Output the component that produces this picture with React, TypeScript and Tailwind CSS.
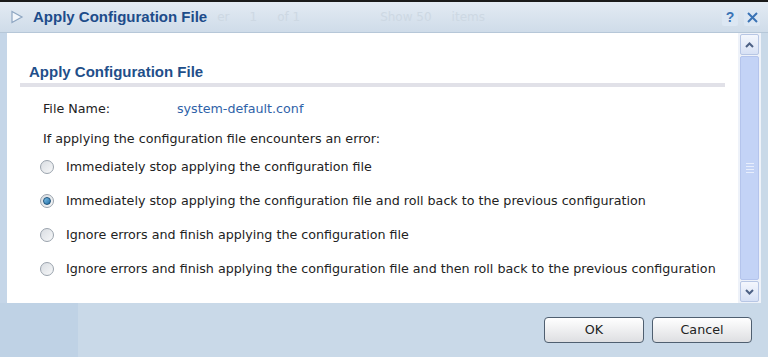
import { useState } from "react";

const options = [
  "Immediately stop applying the configuration file",
  "Immediately stop applying the configuration file and roll back to the previous configuration",
  "Ignore errors and finish applying the configuration file",
  "Ignore errors and finish applying the configuration file and then roll back to the previous configuration",
];

function Radio({ checked }: { checked: boolean }) {
  return (
    <span className="flex h-[14px] w-[14px] shrink-0 items-center justify-center rounded-full border border-[#9aa3ad] bg-gradient-to-br from-[#d9dde2] to-[#f7f8f9]">
      {checked && (
        <span className="h-[8px] w-[8px] rounded-full border border-[#1c4f77] bg-gradient-to-br from-[#7fc3ea] to-[#1f6fa6]" />
      )}
    </span>
  );
}

function ScrollBtn({ dir }: { dir: "up" | "down" }) {
  return (
    <div className="flex h-[21px] items-center justify-center rounded-[2px] border border-[#b7c6e4] bg-gradient-to-b from-[#f4f7fd] to-[#d7e1f5]">
      <svg width="9" height="6" viewBox="0 0 9 6">
        <path
          d={dir === "up" ? "M1 5 L4.5 1.5 L8 5" : "M1 1 L4.5 4.5 L8 1"}
          fill="none"
          stroke="#4d6185"
          strokeWidth="2"
        />
      </svg>
    </div>
  );
}

export default function App() {
  const [choice, setChoice] = useState(1);

  return (
    <div className="flex h-[357px] w-[768px] flex-col overflow-hidden bg-[#c9d9e8] font-['DejaVu_Sans',Verdana,sans-serif] text-[12.7px] leading-[16px] text-[#222]">
      <div className="h-[2px] bg-[#1a1a1a]" />

      {/* title bar */}
      <div className="flex h-[31px] items-center border-b border-[#b6c7d8] bg-gradient-to-b from-[#e3ebf3] to-[#cfdce9] pl-[10px] pr-[8px]">
        <svg width="14" height="14" viewBox="0 0 14 14" className="mr-[9px]">
          <path d="M2 1.5 L12 7 L2 12.5 Z" fill="#f2f6fb" stroke="#8ea6c2" strokeWidth="1.2" />
        </svg>
        <span className="font-['Liberation_Sans',Arial,sans-serif] text-[15px] font-bold text-[#1d4c8a]">
          Apply Configuration File
        </span>
        <div className="ml-[10px] flex gap-[20px] text-[12px] text-[#cdd8e3]">
          <span>er</span>
          <span>1</span>
          <span>of 1</span>
          <span className="ml-[60px]">Show 50</span>
          <span>items</span>
        </div>
        <div className="ml-auto flex gap-[6px]">
          <div className="flex h-[17px] w-[16px] items-center justify-center rounded-[2px] bg-[#dce7f3] font-['Liberation_Sans',Arial,sans-serif] text-[14px] font-bold text-[#3a73b5]">
            ?
          </div>
          <div className="flex h-[17px] w-[16px] items-center justify-center rounded-[2px] bg-[#dce7f3]">
            <svg width="11" height="11" viewBox="0 0 11 11">
              <path d="M1 1 L10 10 M10 1 L1 10" stroke="#3a73b5" strokeWidth="2" />
            </svg>
          </div>
        </div>
      </div>

      {/* body */}
      <div className="flex h-[270px]">
        <div className="w-[7px] bg-[#c5d6e8]" />
        <div className="flex-1 bg-white pt-[31px]">
          <div className="pl-[22px] font-['Liberation_Sans',Arial,sans-serif] text-[15px] font-bold text-[#1f4f8a]">
            Apply Configuration File
          </div>
          <div className="ml-[13px] mr-[13px] mt-[3px] h-[4px] bg-[#e1e1e8]" />
          <div className="mt-[14px] flex pl-[36px]">
            <span className="w-[134px]">File Name:</span>
            <span className="text-[#2f62a8]">system-default.conf</span>
          </div>
          <div className="mt-[14px] pl-[36px]">If applying the configuration file encounters an error:</div>
          <div className="mt-[12px] flex flex-col gap-[18px] pl-[33px]">
            {options.map((o, i) => (
              <label key={o} className="flex h-[16px] cursor-pointer items-center gap-[12px]" onClick={() => setChoice(i)}>
                <Radio checked={choice === i} />
                <span>{o}</span>
              </label>
            ))}
          </div>
        </div>
        <div className="flex w-[23px] flex-col gap-[1px] bg-[#eef2f9] px-[2px] py-[1px]">
          <ScrollBtn dir="up" />
          <div className="flex flex-1 items-center justify-center rounded-[2px] border border-[#b4c4ec] bg-[#c3d3f6]">
            <div className="flex flex-col gap-[2px]">
              <div className="h-[1px] w-[8px] bg-[#e8eefc]" />
              <div className="h-[1px] w-[8px] bg-[#e8eefc]" />
              <div className="h-[1px] w-[8px] bg-[#e8eefc]" />
              <div className="h-[1px] w-[8px] bg-[#e8eefc]" />
            </div>
          </div>
          <ScrollBtn dir="down" />
        </div>
        <div className="w-[7px] bg-[#c9d9e8]" />
      </div>

      {/* footer */}
      <div className="flex flex-1">
        <div className="w-[78px] bg-[#bfd2e5]" />
        <div className="flex flex-1 justify-end gap-[8px] pr-[16px] pt-[14px]">
          <button className="h-[26px] w-[100px] rounded-[4px] border border-[#4f5f70] bg-gradient-to-b from-white to-[#dedfe2] text-[12.7px] text-[#222]">
            OK
          </button>
          <button className="h-[26px] w-[100px] rounded-[4px] border border-[#4f5f70] bg-gradient-to-b from-white to-[#dedfe2] text-[12.7px] text-[#222]">
            Cancel
          </button>
        </div>
      </div>
    </div>
  );
}
